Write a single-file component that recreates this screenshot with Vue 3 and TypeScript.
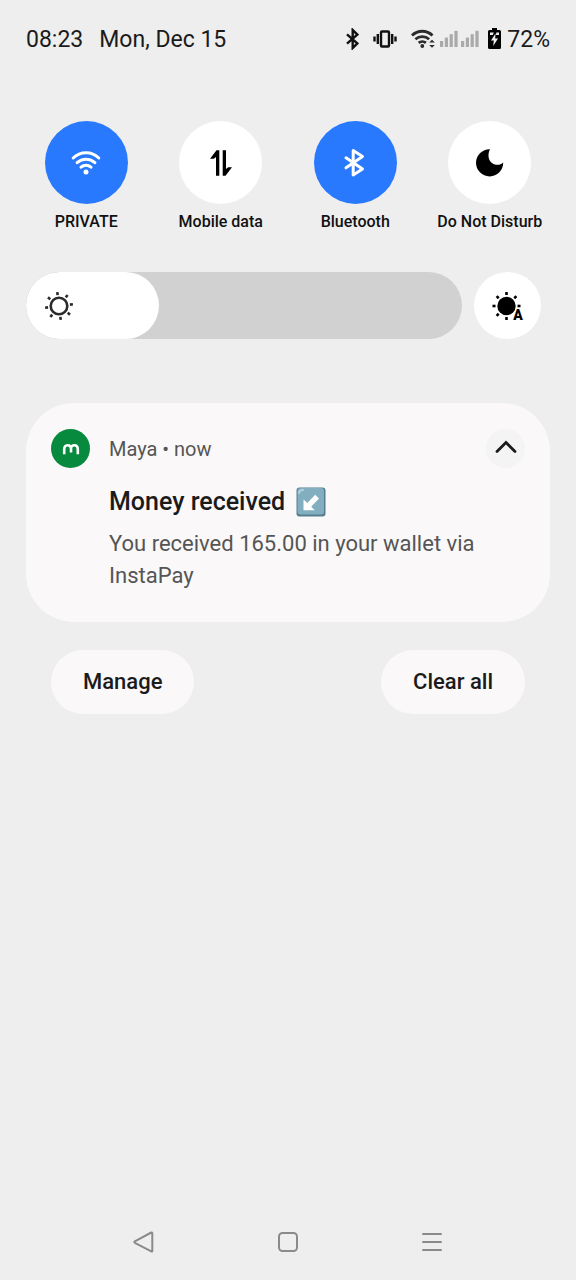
<script setup lang="ts">
import { computed, reactive, ref } from 'vue'

type IconName = 'wifi' | 'data' | 'bluetooth' | 'moon'

interface Tile {
  icon: IconName
  label: string
  active: boolean
}

const tiles = reactive<Tile[]>([
  { icon: 'wifi', label: 'PRIVATE', active: true },
  { icon: 'data', label: 'Mobile data', active: false },
  { icon: 'bluetooth', label: 'Bluetooth', active: true },
  { icon: 'moon', label: 'Do Not Disturb', active: false },
])

const brightness = ref<number>(18)
const fillWidth = computed<string>(
  () => `calc(67px + (100% - 67px) * ${brightness.value / 100})`,
)

const expanded = ref<boolean>(true)
const rayAngles: number[] = [0, 45, 90, 135, 180, 225, 270, 315]
const autoRayAngles: number[] = rayAngles.filter((angle) => angle !== 135)
const signalBars: number[] = [0, 1, 2, 3]
</script>

<template>
  <main class="shade">
    <header class="status">
      <time class="clock">08:23</time>
      <span class="date">Mon, Dec 15</span>
      <div class="indicators">
        <svg class="s-bt" width="14" height="22" viewBox="0 0 14 22" aria-label="Bluetooth">
          <path d="M2 6.300 12.300 15.400 7.700 20V2l4.600 4.600L2 15.700" />
        </svg>
        <svg class="s-vibrate" width="24" height="20" viewBox="0 0 24 20" aria-label="Vibrate">
          <rect x="8" y="2.5" width="8" height="15" rx="1" />
          <path d="M4.800 5v10M1.500 7.500v5M19.200 5v10M22.500 7.500v5" />
        </svg>
        <svg class="s-wifi" width="25" height="20" viewBox="0 0 25 20" aria-label="Wi-Fi">
          <path d="M1 6.500a14.500 14.500 0 0 1 20.500 0M4.400 10.300a10 10 0 0 1 13.700 0M7.700 13.900a5.500 5.500 0 0 1 7.200 0" />
          <circle cx="11.300" cy="17" r="1.900" />
          <path class="solid" d="M18.200 13.500 21 10.700l2.800 2.800zM18.200 16l2.800 2.800 2.800-2.800z" />
        </svg>
        <svg class="s-signal" width="39" height="17" viewBox="0 0 39 17" aria-label="Signal">
          <g v-for="bar in signalBars" :key="bar">
            <rect :x="bar * 4.8" :y="11 - bar * 3.4" width="3.200" :height="6 + bar * 3.4" />
            <rect :x="21 + bar * 4.8" :y="11 - bar * 3.4" width="3.200" :height="6 + bar * 3.4" />
          </g>
        </svg>
        <svg class="s-battery" width="13" height="21" viewBox="0 0 13 21" aria-label="Battery charging">
          <path d="M4 0h5v2h2.500Q13 2 13 3.500v16q0 1.500-1.500 1.500h-10Q0 21 0 19.500v-16Q0 2 1.500 2H4z" />
          <path class="cutout" d="M2 4.500h3.800L4.800 7H2zM8.300 4.500H11V7H8zM7.500 5.500 3 12.500h2.800L5.200 18l4.800-7.500H7.200z" />
        </svg>
        <span class="percent">72%</span>
      </div>
    </header>

    <section class="tiles" aria-label="Quick settings">
      <button
        v-for="tile in tiles"
        :key="tile.label"
        type="button"
        class="tile"
        :class="{ active: tile.active }"
        :aria-pressed="tile.active"
        @click="tile.active = !tile.active"
      >
        <span class="disc">
          <svg v-if="tile.icon === 'wifi'" width="30" height="24" viewBox="0 0 30 24">
            <path class="line" d="M2.200 7a18.500 18.500 0 0 1 25.600 0M6.100 11.700a13 13 0 0 1 17.800 0M10 16.200a7.500 7.500 0 0 1 10 0" />
            <circle cx="15" cy="21" r="2.500" />
          </svg>
          <svg v-else-if="tile.icon === 'data'" width="24" height="28" viewBox="0 0 24 28">
            <path d="M1 9.800 7.500 1.200h2.800v25.600H7V8L4.800 9.800zM23 18.200 16.500 26.800h-2.800V1.200H17V20l2.200-1.800z" />
          </svg>
          <svg v-else-if="tile.icon === 'bluetooth'" width="24" height="30" viewBox="0 0 24 30">
            <path class="line" d="M3 9.800 19.500 21l-9.300 6V2.500l9.300 6L3 19.800" />
          </svg>
          <svg v-else width="28" height="28" viewBox="0 0 28 28">
            <path d="M14 .200A13.600 13.600 0 1 0 27.200 13.500C24.500 16.200 20 16.700 16.300 14.200 12 11.300 11.500 5.200 14 .200z" />
          </svg>
        </span>
        <span class="tile-label">{{ tile.label }}</span>
      </button>
    </section>

    <section class="brightness">
      <div class="slider">
        <div class="fill" :style="{ width: fillWidth }">
          <svg width="32" height="32" viewBox="0 0 32 32">
            <circle class="ring" cx="16" cy="16" r="8.300" />
            <path
              v-for="angle in rayAngles"
              :key="angle"
              class="ray"
              d="M16 2v3"
              :transform="`rotate(${angle - 7} 16 16)`"
            />
          </svg>
        </div>
        <input v-model.number="brightness" type="range" min="0" max="100" aria-label="Brightness" />
      </div>
      <button type="button" class="auto" aria-label="Automatic brightness">
        <svg width="40" height="40" viewBox="0 0 40 40">
          <circle cx="18.500" cy="20" r="9.200" />
          <path
            v-for="angle in autoRayAngles"
            :key="angle"
            class="ray"
            d="M18.500 6v3"
            :transform="`rotate(${angle} 18.5 20)`"
          />
          <text x="30" y="34" text-anchor="middle">A</text>
        </svg>
      </button>
    </section>

    <article class="card">
      <div class="card-head">
        <span class="app-icon">
          <svg width="18" height="14" viewBox="0 0 18 14">
            <path d="M2.200 12.200V7.500Q2.200 3.300 5.600 3.300T9 6.800v3.700V6.800Q9 3.300 12.400 3.300T15.800 7.500v4.700" />
          </svg>
        </span>
        <p class="source">Maya • now</p>
        <button type="button" class="collapse" aria-label="Collapse" @click="expanded = !expanded">
          <svg width="22" height="18" viewBox="0 0 22 18"><path d="M2 11.500 11 2.500l9 9" /></svg>
        </button>
      </div>
      <div class="card-body">
        <h1 class="title">
          <span>Money received</span>
          <svg width="30" height="30" viewBox="0 0 30 30" aria-label="Down-left arrow">
            <rect class="edge" x=".500" y=".500" width="29" height="29" rx="3" />
            <rect class="face" x="1.500" y="1" width="26.500" height="26.500" rx="3" />
            <path class="gleam" d="M3 6q0-3 4-3" />
            <path class="arrow" d="M7.500 12.500v10.800h11.300l-3.600-3.600 7.800-8.200-3.800-3.700-7.900 8.100z" />
          </svg>
        </h1>
        <p v-if="expanded" class="message">You received 165.00 in your wallet via InstaPay</p>
      </div>
    </article>

    <div class="actions">
      <button type="button" class="pill">Manage</button>
      <button type="button" class="pill">Clear all</button>
    </div>

    <nav class="nav">
      <button type="button" aria-label="Back">
        <svg width="24" height="24" viewBox="0 0 24 24">
          <path d="M20.300 3.200v17.600q0 1.200-1 .600L2.800 12.800q-1-.700 0-1.500L19.300 2.500q1-.400 1 .700z" />
        </svg>
      </button>
      <button type="button" aria-label="Home">
        <svg width="24" height="24" viewBox="0 0 24 24"><rect x="3" y="3" width="18" height="18" rx="3.500" /></svg>
      </button>
      <button type="button" aria-label="Recent apps">
        <svg width="24" height="24" viewBox="0 0 24 24"><path d="M3 4h18M3 12h18M3 20h18" /></svg>
      </button>
    </nav>
  </main>
</template>

<style scoped>
.shade {
  box-sizing: border-box;
  display: flex;
  flex-direction: column;
  min-height: 100vh;
  padding-top: 24px;
  background: #eeeeee;
  color: #1b1b1b;
  font-family: Roboto, 'Liberation Sans', sans-serif;
}

button {
  margin: 0;
  padding: 0;
  border: 0;
  background: none;
  color: inherit;
  font-family: inherit;
  cursor: pointer;
}

svg {
  display: block;
  flex: none;
}

h1,
p {
  margin: 0;
}

.status {
  display: flex;
  align-items: center;
  padding: 0 26px;
  font-size: 23px;
  line-height: 32px;
}

.date {
  margin-left: 16px;
}

.indicators {
  display: flex;
  align-items: center;
  margin-left: auto;
}

.indicators svg {
  margin-bottom: 3px;
}

.s-bt,
.s-vibrate,
.s-wifi {
  fill: none;
  stroke: #111111;
  stroke-width: 2.4;
}

.s-bt {
  margin-right: 14px;
}

.s-vibrate {
  margin-right: 14px;
}

.s-wifi {
  margin-right: 4px;
  stroke: #2b2b2b;
  stroke-width: 2.8;
}

.s-wifi circle,
.s-wifi .solid {
  fill: #2b2b2b;
  stroke: none;
}

.s-signal {
  margin-right: 9px;
  fill: #aaaaaa;
}

.s-battery {
  margin-right: 6px;
}

.s-battery .cutout {
  fill: #eeeeee;
}

.tiles {
  display: grid;
  grid-template-columns: repeat(4, 1fr);
  margin-top: 65px;
  padding: 0 19px;
}

.tile {
  display: flex;
  flex-direction: column;
  align-items: center;
  gap: 8px;
}

.disc {
  display: flex;
  align-items: center;
  justify-content: center;
  width: 83px;
  height: 83px;
  border-radius: 50%;
  background: #ffffff;
  color: #000000;
}

.active .disc {
  background: #2979ff;
  color: #ffffff;
}

.disc svg {
  fill: currentColor;
}

.disc .line {
  fill: none;
  stroke: currentColor;
  stroke-width: 3;
  stroke-linecap: round;
  stroke-linejoin: round;
}

.tile-label {
  color: #111111;
  font-size: 16px;
  font-weight: 500;
  line-height: 20px;
  white-space: nowrap;
}

.brightness {
  display: flex;
  gap: 12px;
  margin-top: 40px;
  padding: 0 35px 0 26px;
}

.slider {
  position: relative;
  flex: 1;
  height: 67px;
  overflow: hidden;
  border-radius: 34px;
  background: #d1d1d1;
}

.fill {
  box-sizing: border-box;
  display: flex;
  align-items: center;
  height: 100%;
  padding-left: 17px;
  border-radius: 34px;
  background: #ffffff;
}

.slider input {
  position: absolute;
  inset: 0;
  width: 100%;
  height: 100%;
  margin: 0;
  opacity: 0;
  cursor: pointer;
}

.ring,
.ray {
  fill: none;
  stroke: #2b2b2b;
  stroke-width: 2.6;
}

.auto {
  display: flex;
  align-items: center;
  justify-content: center;
  width: 67px;
  height: 67px;
  border-radius: 50%;
  background: #ffffff;
}

.auto .ray {
  stroke: #000000;
}

.auto text {
  font-size: 14px;
  font-weight: 900;
}

.card {
  margin: 64px 26px 0;
  padding: 26px 25px 30px;
  border-radius: 48px;
  background: #faf8f9;
}

.card-head {
  display: flex;
  align-items: center;
}

.app-icon {
  display: flex;
  align-items: center;
  justify-content: center;
  width: 39px;
  height: 39px;
  border-radius: 50%;
  background: #078a3e;
}

.app-icon path {
  fill: none;
  stroke: #ffffff;
  stroke-width: 2.6;
}

.source {
  flex: 1;
  margin-left: 19px;
  color: #555555;
  font-size: 20px;
  line-height: 28px;
}

.collapse {
  display: flex;
  align-items: center;
  justify-content: center;
  width: 39px;
  height: 39px;
  border-radius: 50%;
  background: #f4f4f4;
}

.collapse path {
  fill: none;
  stroke: #1b1b1b;
  stroke-width: 2.8;
  stroke-linecap: round;
}

.card-body {
  margin: 16px 0 0 58px;
}

.title {
  display: flex;
  align-items: center;
  gap: 11px;
  font-size: 25px;
  font-weight: 500;
  line-height: 36px;
}

.edge {
  fill: #557f91;
}

.face {
  fill: #82aebf;
}

.gleam {
  fill: none;
  stroke: #b4d0dc;
  stroke-width: 2;
  stroke-linecap: round;
}

.arrow {
  fill: #ffffff;
}

.message {
  margin-top: 8px;
  color: #555555;
  font-size: 22px;
  line-height: 32px;
}

.actions {
  display: flex;
  justify-content: space-between;
  margin-top: 28px;
  padding: 0 51px;
}

.pill {
  height: 64px;
  padding: 0 32px;
  border-radius: 32px;
  background: #faf8f9;
  font-size: 22px;
  font-weight: 500;
  line-height: 32px;
}

.nav {
  display: grid;
  grid-template-columns: repeat(3, 1fr);
  margin-top: auto;
  padding: 0 72px 14px;
}

.nav button {
  display: flex;
  justify-content: center;
  padding: 12px 0;
}

.nav svg {
  fill: none;
  stroke: #8a8a8a;
  stroke-width: 2;
  stroke-linecap: round;
  stroke-linejoin: round;
}
</style>

<style>
body {
  background: #eeeeee;
}
</style>
